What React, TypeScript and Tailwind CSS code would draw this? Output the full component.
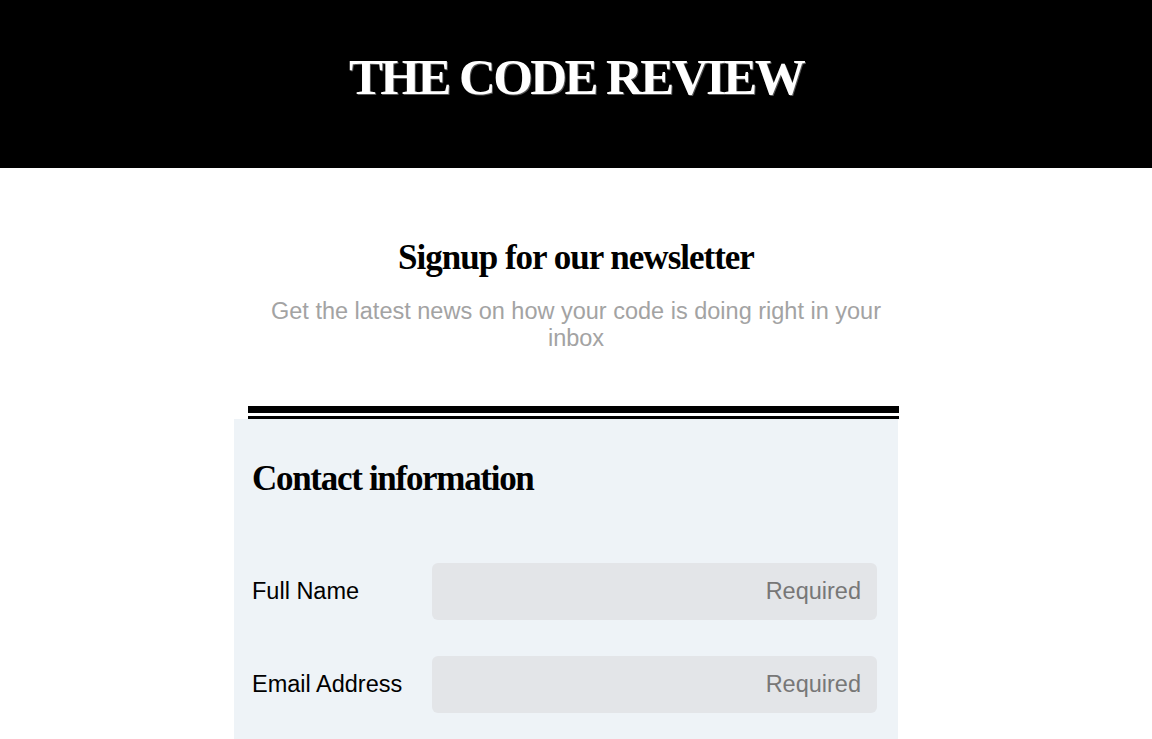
export default function App() {
  return (
    <div className="min-h-screen bg-white">
      <header className="flex h-[168px] items-center justify-center bg-black pb-[14px]">
        <h1 className="font-['Liberation_Serif',serif] text-[51px] font-bold leading-none tracking-[-2.6px] text-white [text-shadow:1px_1px_0_#555]">
          THE CODE REVIEW
        </h1>
      </header>

      <section className="mx-auto flex w-[664px] flex-col items-center pt-[70px]">
        <h2 className="font-['Liberation_Serif',serif] text-[35px] font-bold leading-[40px] tracking-[-1px] text-black">
          Signup for our newsletter
        </h2>
        <p className="mt-[20px] w-[640px] text-center font-['Liberation_Sans',sans-serif] text-[23.5px] leading-[27px] text-[#a3a3a3]">
          Get the latest news on how your code is doing right in your inbox
        </p>
      </section>

      <div className="mx-auto mt-[54px] w-[684px] pr-[20px]">
        <div className="ml-[14px] h-[13px] w-[651px] border-t-[7px] border-b-[3px] border-black" />
        <form className="bg-[#eef3f7] pl-[18px] pr-[21px] pt-[38px] pb-[60px]">
          <h3 className="font-['Liberation_Serif',serif] text-[35px] font-bold leading-[44px] tracking-[-1.3px] text-black">
            Contact information
          </h3>
          <div className="mt-[62px] flex flex-col gap-[36px]">
            <label className="flex items-center">
              <span className="w-[180px] font-['Liberation_Sans',sans-serif] text-[23.5px] text-black">
                Full Name
              </span>
              <input
                className="h-[57px] flex-1 rounded-[6px] bg-[#e3e5e8] px-4 text-right font-['Liberation_Sans',sans-serif] text-[23.5px] text-black placeholder:text-[#777] focus:outline-none"
                name="fullname"
                type="text"
                placeholder="Required"
              />
            </label>
            <label className="flex items-center">
              <span className="w-[180px] font-['Liberation_Sans',sans-serif] text-[23.5px] text-black">
                Email Address
              </span>
              <input
                className="h-[57px] flex-1 rounded-[6px] bg-[#e3e5e8] px-4 text-right font-['Liberation_Sans',sans-serif] text-[23.5px] text-black placeholder:text-[#777] focus:outline-none"
                name="email"
                type="email"
                placeholder="Required"
              />
            </label>
          </div>
        </form>
      </div>
    </div>
  );
}
